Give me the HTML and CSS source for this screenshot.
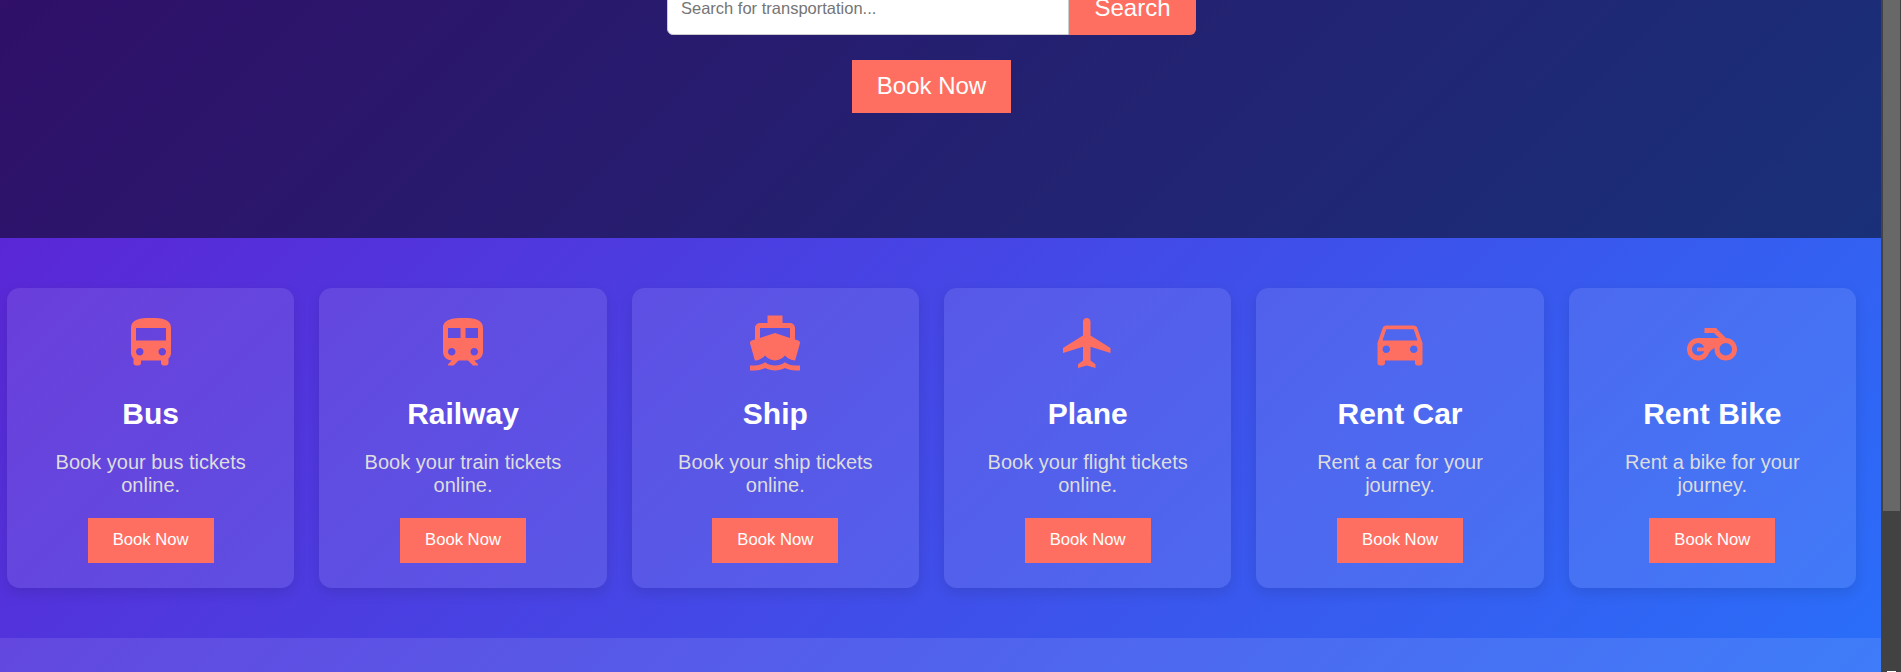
FILE: index.html
```html
<!DOCTYPE html>
<html lang="en">
<head>
<meta charset="utf-8">
<title>Transportation Booking</title>
<link rel="stylesheet" href="styles.css">
</head>
<body>
<main class="page">
  <section class="hero">
    <form class="search">
      <input class="search-input" type="text" placeholder="Search for transportation...">
      <button class="search-button" type="button">Search</button>
    </form>
    <button class="hero-button" type="button">Book Now</button>
  </section>
  <section class="services">
    <article class="card">
      <svg class="icon" viewBox="0 0 24 24"><path d="M4 16c0 .88.39 1.67 1 2.22V20c0 .55.45 1 1 1h1c.55 0 1-.45 1-1v-1h8v1c0 .55.45 1 1 1h1c.55 0 1-.45 1-1v-1.78c.61-.55 1-1.34 1-2.22V6c0-3.5-3.58-4-8-4s-8 .5-8 4v10zm3.500 1c-.83 0-1.500-.67-1.500-1.500S6.670 14 7.500 14s1.500.67 1.500 1.500S8.330 17 7.500 17zm9 0c-.83 0-1.500-.67-1.500-1.500s.67-1.500 1.500-1.500 1.500.67 1.500 1.500-.67 1.500-1.500 1.500zm1.500-6H6V6h12v5z"/></svg>
      <h2 class="title">Bus</h2>
      <p class="text">Book your bus tickets online.</p>
      <button class="button" type="button">Book Now</button>
    </article>
    <article class="card">
      <svg class="icon" viewBox="0 0 24 24"><path d="M12 2c-4 0-8 .5-8 4v9.500C4 17.430 5.570 19 7.500 19L6 20.500v.5h2.230l2-2H14l2 2h2v-.5L16.500 19c1.930 0 3.500-1.570 3.500-3.500V6c0-3.500-3.580-4-8-4zM7.500 17c-.83 0-1.500-.67-1.500-1.500S6.670 14 7.500 14s1.500.67 1.500 1.500S8.330 17 7.500 17zm3.500-7H6V6h5v4zm2 0V6h5v4h-5zm3.500 7c-.83 0-1.500-.67-1.500-1.500s.67-1.500 1.500-1.500 1.500.67 1.500 1.500-.67 1.500-1.500 1.500z"/></svg>
      <h2 class="title">Railway</h2>
      <p class="text">Book your train tickets online.</p>
      <button class="button" type="button">Book Now</button>
    </article>
    <article class="card">
      <svg class="icon" viewBox="0 0 24 24"><path d="M20 21c-1.390 0-2.780-.47-4-1.320-2.440 1.710-5.560 1.710-8 0C6.780 20.530 5.390 21 4 21H2v2h2c1.380 0 2.740-.35 4-.99 2.520 1.290 5.480 1.290 8 0 1.260.65 2.620.99 4 .99h2v-2h-2zM3.950 19H4c1.600 0 3.020-.88 4-2 .98 1.120 2.400 2 4 2s3.020-.88 4-2c.98 1.120 2.400 2 4 2h.05l1.890-6.680c.08-.26.06-.54-.06-.78s-.34-.42-.6-.5L20 10.620V6c0-1.100-.9-2-2-2h-3V1H9v3H6c-1.100 0-2 .9-2 2v4.620l-1.290.42c-.26.08-.48.26-.6.5s-.15.52-.06.78L3.950 19zM6 6h12v3.970L12 8 6 9.970V6z"/></svg>
      <h2 class="title">Ship</h2>
      <p class="text">Book your ship tickets online.</p>
      <button class="button" type="button">Book Now</button>
    </article>
    <article class="card">
      <svg class="icon" viewBox="0 0 24 24"><path d="M21 16v-2l-8-5V3.500c0-.83-.67-1.500-1.500-1.500S10 2.670 10 3.500V9l-8 5v2l8-2.500V19l-2 1.500V22l3.500-1 3.500 1v-1.500L13 19v-5.500l8 2.500z"/></svg>
      <h2 class="title">Plane</h2>
      <p class="text">Book your flight tickets online.</p>
      <button class="button" type="button">Book Now</button>
    </article>
    <article class="card">
      <svg class="icon" viewBox="0 0 24 24"><path d="M18.920 6.010C18.720 5.420 18.160 5 17.500 5h-11c-.66 0-1.210.42-1.420 1.010L3 12v8c0 .55.45 1 1 1h1c.55 0 1-.45 1-1v-1h12v1c0 .55.45 1 1 1h1c.55 0 1-.45 1-1v-8l-2.080-5.990zM6.500 16c-.83 0-1.500-.67-1.500-1.500S5.670 13 6.500 13s1.500.67 1.500 1.500S7.330 16 6.500 16zm11 0c-.83 0-1.500-.67-1.500-1.500s.67-1.500 1.500-1.500 1.500.67 1.500 1.500-.67 1.500-1.500 1.500zM5 11l1.500-4.500h11L19 11H5z"/></svg>
      <h2 class="title">Rent Car</h2>
      <p class="text">Rent a car for your journey.</p>
      <button class="button" type="button">Book Now</button>
    </article>
    <article class="card">
      <svg class="icon" viewBox="0 0 24 24"><circle class="wheel" cx="6.500" cy="14.500" r="3.500"/><circle class="wheel" cx="17.500" cy="14.500" r="3.500"/><path d="M9 6h4.600l4 4-4.400 3.900-1.400.8-1.600 1.800L8.900 15.250H6v-1.500h2.900A2.500 2.500 0 0 0 6.500 12V10h8.300l-2-2H9z"/></svg>
      <h2 class="title">Rent Bike</h2>
      <p class="text">Rent a bike for your journey.</p>
      <button class="button" type="button">Book Now</button>
    </article>
  </section>
  <section class="next"></section>
</main>
<aside class="scrollbar"><div class="thumb"></div><div class="arrow"></div></aside>
</body>
</html>
```
FILE: styles.css
```css
* { box-sizing: border-box; }
body {
  margin: 0;
  display: flex;
  height: 672px;
  overflow: hidden;
  font-family: "Liberation Sans", Arial, sans-serif;
}
.page {
  width: 1881px;
  display: flex;
  flex-direction: column;
  background: linear-gradient(135deg, #6a11cb, #2575fc) 0 -476px / 1881px 1364px no-repeat;
}
.hero {
  height: 238px;
  display: flex;
  flex-direction: column;
  align-items: center;
  padding-right: 18px;
  background: rgba(0, 0, 0, 0.5);
}
.search {
  display: flex;
  align-items: flex-end;
  height: 35px;
  margin: 0 0 25px;
}
.search-input {
  width: 402px;
  height: 54px;
  padding: 0 13px;
  border: 1px solid #ccc;
  border-radius: 6px 0 0 6px;
  background: #fff;
  font: 16.500px "Liberation Sans", Arial, sans-serif;
}
.search-input::placeholder { color: #757575; }
.search-button {
  width: 127px;
  height: 54px;
  padding: 0 0 1px;
  border: 0;
  border-radius: 0 6px 6px 0;
  background: #ff6f61;
  color: #fff;
  font: 24px "Liberation Sans", Arial, sans-serif;
}
.hero-button {
  width: 159px;
  height: 53px;
  padding: 0 0 2px;
  border: 0;
  background: #ff6f61;
  color: #fff;
  font: 24px "Liberation Sans", Arial, sans-serif;
}
.services {
  height: 400px;
  display: grid;
  grid-template-columns: repeat(6, 1fr);
  gap: 25px;
  padding: 50px 25px 50px 7px;
}
.card {
  display: flex;
  flex-direction: column;
  align-items: center;
  padding: 25px;
  border-radius: 12.500px;
  background: rgba(255, 255, 255, 0.1);
  box-shadow: 0 5px 12.500px rgba(0, 0, 0, 0.1);
  text-align: center;
}
.icon {
  flex: none;
  width: 60px;
  height: 60px;
  fill: #ff6f61;
}
.wheel {
  fill: none;
  stroke: #ff6f61;
  stroke-width: 2;
}
.title {
  margin: 24px 0 0;
  color: #fff;
  font-size: 30px;
  line-height: 34px;
}
.text {
  margin: 20px 0 0;
  padding: 0 12px;
  color: #ddd;
  font-size: 20px;
  line-height: 23px;
}
.button {
  width: 126px;
  height: 45px;
  margin-top: auto;
  padding: 0 0 2px;
  border: 0;
  background: #ff6f61;
  color: #fff;
  font: 16.670px "Liberation Sans", Arial, sans-serif;
}
.next {
  flex: 1;
  background: rgba(255, 255, 255, 0.1);
}
.scrollbar {
  width: 20px;
  display: flex;
  flex-direction: column;
  justify-content: space-between;
  padding: 0 1px 0 2px;
  background: #424242;
}
.thumb {
  height: 511px;
  background: #686868;
}
.arrow {
  width: 9px;
  height: 1px;
  margin-left: 4px;
  background: #fff;
}
```
